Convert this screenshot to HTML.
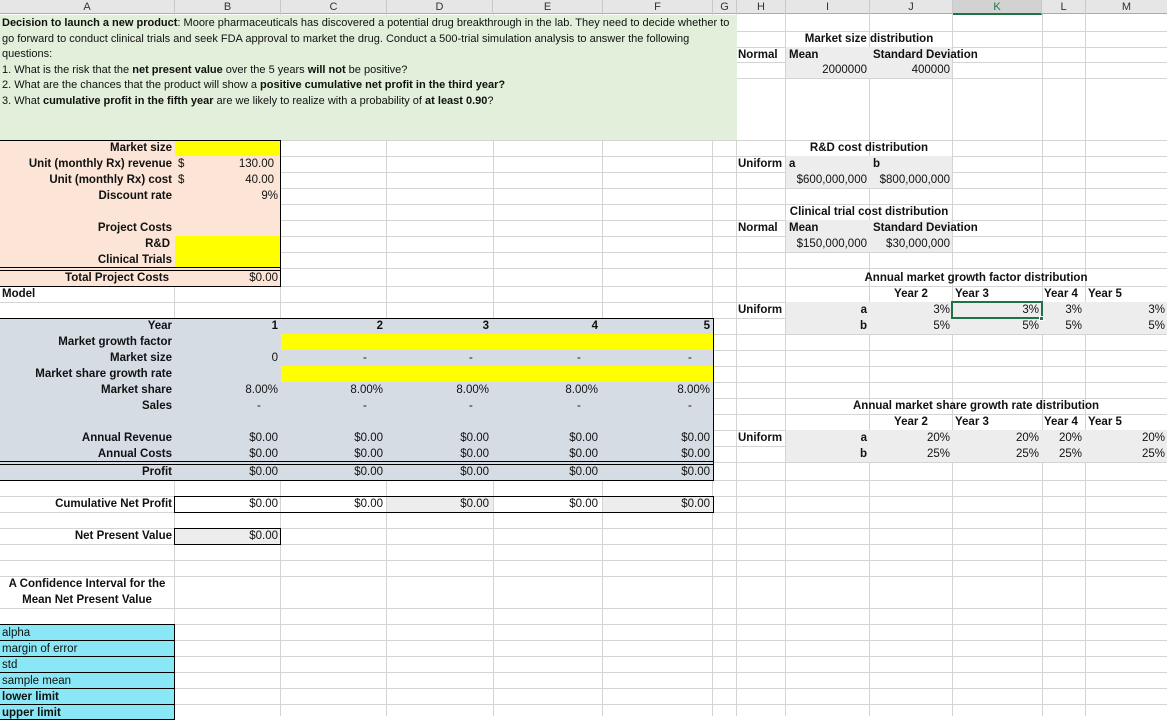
<!DOCTYPE html>
<html><head><meta charset="utf-8"><style>
*{margin:0;padding:0;box-sizing:border-box}
body{width:1167px;height:716px;overflow:hidden;background:#fff;position:relative;font-family:"Liberation Sans",Arial,sans-serif;font-size:11.5px;color:#111}
div{position:absolute}
.v{top:14px;bottom:0;width:1px;background:#d4d4d4}
.h{left:0;right:0;height:1px;background:#d4d4d4}
.t{white-space:nowrap;line-height:17px;height:16px}
.b{font-weight:bold}
.r{text-align:right}
.c{text-align:center}
.d{font-size:11px;line-height:17px}
.hd{top:0;height:14px;line-height:14px;text-align:center;color:#333;font-size:11px;border-right:1px solid #c8c8c8}
</style></head><body>
<!-- gridlines -->
<div class="v" style="left:174px"></div><div class="v" style="left:280px"></div><div class="v" style="left:386px"></div><div class="v" style="left:493px"></div><div class="v" style="left:602px"></div><div class="v" style="left:712px"></div><div class="v" style="left:736px"></div><div class="v" style="left:785px"></div><div class="v" style="left:869px"></div><div class="v" style="left:952px"></div><div class="v" style="left:1042px"></div><div class="v" style="left:1085px"></div>
<div class="h" style="top:31px"></div><div class="h" style="top:47px"></div><div class="h" style="top:62px"></div><div class="h" style="top:78px"></div>
<div class="h" style="top:140px"></div><div class="h" style="top:156px"></div><div class="h" style="top:172px"></div><div class="h" style="top:188px"></div><div class="h" style="top:204px"></div><div class="h" style="top:220px"></div><div class="h" style="top:236px"></div><div class="h" style="top:252px"></div><div class="h" style="top:268px"></div><div class="h" style="top:286px"></div><div class="h" style="top:302px"></div><div class="h" style="top:318px"></div><div class="h" style="top:334px"></div><div class="h" style="top:350px"></div><div class="h" style="top:366px"></div><div class="h" style="top:382px"></div><div class="h" style="top:398px"></div><div class="h" style="top:414px"></div><div class="h" style="top:430px"></div><div class="h" style="top:446px"></div><div class="h" style="top:462px"></div><div class="h" style="top:480px"></div><div class="h" style="top:496px"></div><div class="h" style="top:512px"></div><div class="h" style="top:528px"></div><div class="h" style="top:544px"></div><div class="h" style="top:560px"></div><div class="h" style="top:576px"></div><div class="h" style="top:608px"></div><div class="h" style="top:624px"></div><div class="h" style="top:640px"></div><div class="h" style="top:656px"></div><div class="h" style="top:672px"></div><div class="h" style="top:688px"></div><div class="h" style="top:704px"></div>
<div style="left:0;top:577px;width:174px;height:31px;background:#fff"></div>
<!-- header -->
<div style="left:0;top:0;width:1167px;height:14px;background:#e6e6e6;border-bottom:1px solid #ababab"></div>
<div class="hd" style="left:0;width:175px">A</div><div class="hd" style="left:175px;width:106px">B</div><div class="hd" style="left:281px;width:106px">C</div><div class="hd" style="left:387px;width:106px">D</div><div class="hd" style="left:493px;width:110px">E</div><div class="hd" style="left:603px;width:110px">F</div><div class="hd" style="left:713px;width:24px">G</div><div class="hd" style="left:737px;width:49px">H</div><div class="hd" style="left:786px;width:84px">I</div><div class="hd" style="left:870px;width:83px">J</div><div class="hd" style="left:953px;width:89px;background:#d2d2d2;color:#217346;border-bottom:2px solid #217346;height:15px">K</div><div class="hd" style="left:1042px;width:44px">L</div><div class="hd" style="left:1086px;width:81px;border:none">M</div>
<!-- green description -->
<div style="left:0;top:15px;width:737px;height:125px;background:#e2efda"></div>
<div class="t d" style="left:2px;top:15px"><b>Decision to launch a new product</b>: Moore pharmaceuticals has discovered a potential drug breakthrough in the lab. They need to decide whether to</div>
<div class="t d" style="left:2px;top:31px">go forward to conduct clinical trials and seek FDA approval to market the drug. Conduct a 500-trial simulation analysis to answer the following</div>
<div class="t d" style="left:2px;top:46px">questions:</div>
<div class="t d" style="left:2px;top:62px">1. What is the risk that the <b>net present value</b> over the 5 years <b>will not</b> be positive?</div>
<div class="t d" style="left:2px;top:77px">2. What are the chances that the product will show a <b>positive cumulative net profit in the third year?</b></div>
<div class="t d" style="left:2px;top:93px">3. What <b>cumulative profit in the fifth year</b> are we likely to realize with a probability of <b>at least 0.90</b>?</div>
<!-- peach block -->
<div style="left:0;top:140px;width:281px;height:147px;background:#fce4d6;border-top:1px solid #000;border-right:1px solid #000;border-bottom:1px solid #000"></div>
<div style="left:175px;top:141px;width:105px;height:15px;background:#ff0"></div>
<div style="left:175px;top:236px;width:105px;height:32px;background:#ff0"></div>
<div style="left:0;top:267px;width:281px;height:4px;border-top:1px solid #000;border-bottom:1px solid #000"></div>
<div class="t b r" style="left:0;top:140px;width:172px">Market size</div>
<div class="t b r" style="left:0;top:156px;width:172px">Unit (monthly Rx) revenue</div><div class="t" style="left:178px;top:156px">$</div><div class="t r" style="left:175px;top:156px;width:99px">130.00</div>
<div class="t b r" style="left:0;top:172px;width:172px">Unit (monthly Rx) cost</div><div class="t" style="left:178px;top:172px">$</div><div class="t r" style="left:175px;top:172px;width:99px">40.00</div>
<div class="t b r" style="left:0;top:188px;width:172px">Discount rate</div><div class="t r" style="left:175px;top:188px;width:103px">9%</div>
<div class="t b r" style="left:0;top:220px;width:172px">Project Costs</div>
<div class="t b r" style="left:0;top:236px;width:170px">R&amp;D</div>
<div class="t b r" style="left:0;top:252px;width:172px">Clinical Trials</div>
<div class="t b r" style="left:0;top:270px;width:169px">Total Project Costs</div><div class="t r" style="left:175px;top:270px;width:103px">$0.00</div>
<div class="t b" style="left:2px;top:286px">Model</div>
<!-- model table -->
<div style="left:0;top:318px;width:714px;height:163px;background:#d6dce4;border-top:1px solid #000;border-right:1px solid #000;border-bottom:1px solid #000"></div>
<div style="left:281px;top:334px;width:432px;height:16px;background:#ff0"></div>
<div style="left:281px;top:366px;width:432px;height:16px;background:#ff0"></div>
<div style="left:0;top:461px;width:714px;height:4px;border-top:1px solid #000;border-bottom:1px solid #000"></div>
<div class="t b r" style="left:0;top:318px;width:172px">Year</div>
<div class="t b r" style="left:0;top:334px;width:172px">Market growth factor</div>
<div class="t b r" style="left:0;top:350px;width:172px">Market size</div>
<div class="t b r" style="left:0;top:366px;width:172px">Market share growth rate</div>
<div class="t b r" style="left:0;top:382px;width:172px">Market share</div>
<div class="t b r" style="left:0;top:398px;width:172px">Sales</div>
<div class="t b r" style="left:0;top:430px;width:172px">Annual Revenue</div>
<div class="t b r" style="left:0;top:446px;width:172px">Annual Costs</div>
<div class="t b r" style="left:0;top:464px;width:172px">Profit</div>
<div class="t b r" style="left:0;top:318px;width:278px">1</div><div class="t b r" style="left:0;top:318px;width:383px">2</div><div class="t b r" style="left:0;top:318px;width:489px">3</div><div class="t b r" style="left:0;top:318px;width:598px">4</div><div class="t b r" style="left:0;top:318px;width:710px">5</div>
<div class="t r" style="left:0;top:350px;width:278px">0</div><div class="t" style="left:363px;top:350px">-</div><div class="t" style="left:469px;top:350px">-</div><div class="t" style="left:577px;top:350px">-</div><div class="t" style="left:688px;top:350px">-</div>
<div class="t r" style="left:0;top:382px;width:278px">8.00%</div><div class="t r" style="left:0;top:382px;width:383px">8.00%</div><div class="t r" style="left:0;top:382px;width:489px">8.00%</div><div class="t r" style="left:0;top:382px;width:598px">8.00%</div><div class="t r" style="left:0;top:382px;width:710px">8.00%</div>
<div class="t" style="left:257px;top:398px">-</div><div class="t" style="left:363px;top:398px">-</div><div class="t" style="left:469px;top:398px">-</div><div class="t" style="left:577px;top:398px">-</div><div class="t" style="left:688px;top:398px">-</div>
<div class="t r" style="left:0;top:430px;width:278px">$0.00</div><div class="t r" style="left:0;top:430px;width:383px">$0.00</div><div class="t r" style="left:0;top:430px;width:489px">$0.00</div><div class="t r" style="left:0;top:430px;width:598px">$0.00</div><div class="t r" style="left:0;top:430px;width:710px">$0.00</div>
<div class="t r" style="left:0;top:446px;width:278px">$0.00</div><div class="t r" style="left:0;top:446px;width:383px">$0.00</div><div class="t r" style="left:0;top:446px;width:489px">$0.00</div><div class="t r" style="left:0;top:446px;width:598px">$0.00</div><div class="t r" style="left:0;top:446px;width:710px">$0.00</div>
<div class="t r" style="left:0;top:464px;width:278px">$0.00</div><div class="t r" style="left:0;top:464px;width:383px">$0.00</div><div class="t r" style="left:0;top:464px;width:489px">$0.00</div><div class="t r" style="left:0;top:464px;width:598px">$0.00</div><div class="t r" style="left:0;top:464px;width:710px">$0.00</div>
<!-- cumulative -->
<div style="left:387px;top:496px;width:106px;height:16px;background:#ededed"></div>
<div style="left:603px;top:496px;width:110px;height:16px;background:#ededed"></div>
<div style="left:174px;top:496px;width:540px;height:17px;border:1px solid #000"></div>
<div class="t b r" style="left:0;top:496px;width:172px">Cumulative Net Profit</div>
<div class="t r" style="left:0;top:496px;width:278px">$0.00</div><div class="t r" style="left:0;top:496px;width:383px">$0.00</div><div class="t r" style="left:0;top:496px;width:489px">$0.00</div><div class="t r" style="left:0;top:496px;width:598px">$0.00</div><div class="t r" style="left:0;top:496px;width:710px">$0.00</div>
<div style="left:174px;top:528px;width:107px;height:17px;border:1px solid #000;background:#ededed"></div>
<div class="t b r" style="left:0;top:528px;width:172px">Net Present Value</div><div class="t r" style="left:0;top:528px;width:278px">$0.00</div>
<div class="t b c" style="left:0;top:576px;width:174px">A Confidence Interval for the</div>
<div class="t b c" style="left:0;top:592px;width:174px">Mean Net Present Value</div>
<!-- cyan -->
<div style="left:0;top:624px;width:175px;height:96px;background:#8ae8f6;border:1px solid #000;border-left:none"></div>
<div class="h" style="top:640px;width:175px;background:#000"></div><div class="h" style="top:656px;width:175px;background:#000"></div><div class="h" style="top:672px;width:175px;background:#000"></div><div class="h" style="top:688px;width:175px;background:#000"></div><div class="h" style="top:704px;width:175px;background:#000"></div>
<div class="t" style="left:2px;top:625px">alpha</div><div class="t" style="left:2px;top:641px">margin of error</div><div class="t" style="left:2px;top:657px">std</div><div class="t" style="left:2px;top:673px">sample mean</div><div class="t b" style="left:2px;top:689px">lower limit</div><div class="t b" style="left:2px;top:705px">upper limit</div>
<!-- right side distributions -->
<div style="left:786px;top:47px;width:166px;height:31px;background:#ededed"></div>
<div class="t b c" style="left:786px;top:31px;width:166px">Market size distribution</div>
<div class="t b" style="left:738px;top:47px">Normal</div><div class="t b" style="left:789px;top:47px">Mean</div><div class="t b" style="left:873px;top:47px">Standard Deviation</div>
<div class="t r" style="left:786px;top:62px;width:81px">2000000</div><div class="t r" style="left:870px;top:62px;width:80px">400000</div>
<div style="left:786px;top:156px;width:166px;height:32px;background:#ededed"></div>
<div class="t b c" style="left:786px;top:140px;width:166px">R&amp;D cost distribution</div>
<div class="t b" style="left:738px;top:156px">Uniform</div><div class="t b" style="left:789px;top:156px">a</div><div class="t b" style="left:873px;top:156px">b</div>
<div class="t r" style="left:786px;top:172px;width:81px">$600,000,000</div><div class="t r" style="left:870px;top:172px;width:80px">$800,000,000</div>
<div style="left:786px;top:220px;width:166px;height:32px;background:#ededed"></div>
<div class="t b c" style="left:786px;top:204px;width:166px">Clinical trial cost distribution</div>
<div class="t b" style="left:738px;top:220px">Normal</div><div class="t b" style="left:789px;top:220px">Mean</div><div class="t b" style="left:873px;top:220px">Standard Deviation</div>
<div class="t r" style="left:786px;top:236px;width:81px">$150,000,000</div><div class="t r" style="left:870px;top:236px;width:80px">$30,000,000</div>
<div style="left:786px;top:302px;width:381px;height:32px;background:#ededed"></div>
<div class="t b c" style="left:786px;top:270px;width:380px">Annual market growth factor distribution</div>
<div class="t b c" style="left:870px;top:286px;width:82px">Year 2</div><div class="t b" style="left:955px;top:286px">Year 3</div><div class="t b" style="left:1044px;top:286px">Year 4</div><div class="t b" style="left:1088px;top:286px">Year 5</div>
<div class="t b" style="left:738px;top:302px">Uniform</div><div class="t b r" style="left:786px;top:302px;width:81px">a</div><div class="t b r" style="left:786px;top:318px;width:81px">b</div>
<div class="t r" style="left:870px;top:302px;width:80px">3%</div><div class="t r" style="left:953px;top:302px;width:86px">3%</div><div class="t r" style="left:1042px;top:302px;width:40px">3%</div><div class="t r" style="left:1086px;top:302px;width:79px">3%</div>
<div class="t r" style="left:870px;top:318px;width:80px">5%</div><div class="t r" style="left:953px;top:318px;width:86px">5%</div><div class="t r" style="left:1042px;top:318px;width:40px">5%</div><div class="t r" style="left:1086px;top:318px;width:79px">5%</div>
<div style="left:951px;top:301px;width:92px;height:18px;border:2px solid #217346"></div>
<div style="left:1039px;top:316px;width:5px;height:5px;background:#217346;border:1px solid #fff"></div>
<div style="left:786px;top:430px;width:381px;height:32px;background:#ededed"></div>
<div class="t b c" style="left:786px;top:398px;width:380px">Annual market share growth rate distribution</div>
<div class="t b c" style="left:870px;top:414px;width:82px">Year 2</div><div class="t b" style="left:955px;top:414px">Year 3</div><div class="t b" style="left:1044px;top:414px">Year 4</div><div class="t b" style="left:1088px;top:414px">Year 5</div>
<div class="t b" style="left:738px;top:430px">Uniform</div><div class="t b r" style="left:786px;top:430px;width:81px">a</div><div class="t b r" style="left:786px;top:446px;width:81px">b</div>
<div class="t r" style="left:870px;top:430px;width:80px">20%</div><div class="t r" style="left:953px;top:430px;width:86px">20%</div><div class="t r" style="left:1042px;top:430px;width:40px">20%</div><div class="t r" style="left:1086px;top:430px;width:79px">20%</div>
<div class="t r" style="left:870px;top:446px;width:80px">25%</div><div class="t r" style="left:953px;top:446px;width:86px">25%</div><div class="t r" style="left:1042px;top:446px;width:40px">25%</div><div class="t r" style="left:1086px;top:446px;width:79px">25%</div>
</body></html>
